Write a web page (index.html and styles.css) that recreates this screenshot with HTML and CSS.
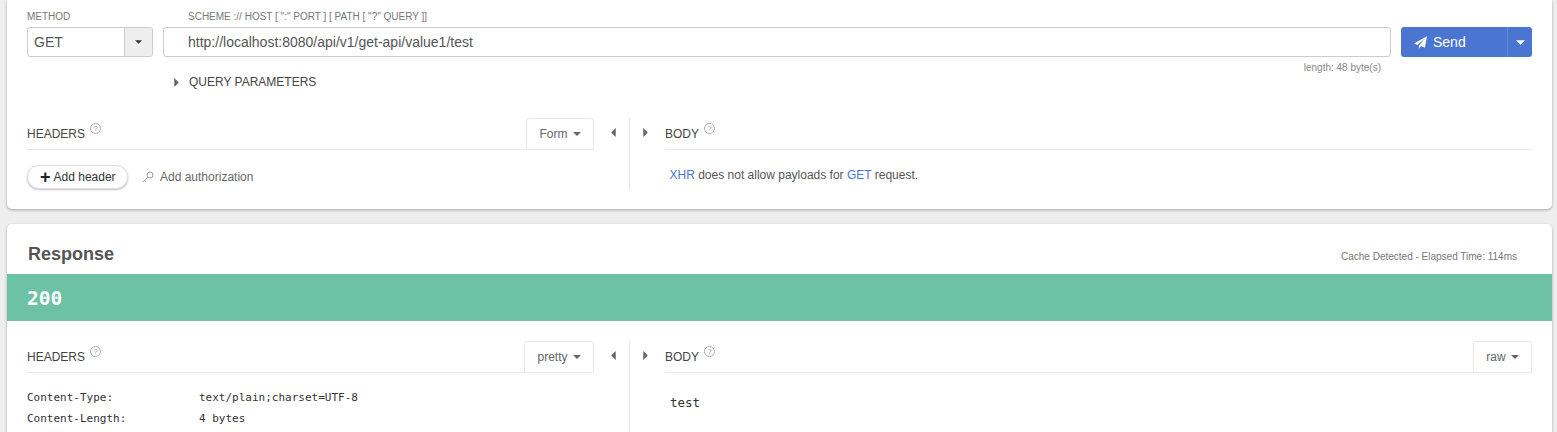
FILE: index.html
```html
<!DOCTYPE html>
<html lang="en">
<head>
<meta charset="utf-8">
<title>REST client</title>
<link rel="stylesheet" href="styles.css">
</head>
<body>
<svg class="defs" width="0" height="0" aria-hidden="true">
  <symbol id="down" viewBox="0 0 8 4"><path d="M0 0h8L4 4z"/></symbol>
  <symbol id="left" viewBox="0 0 4 8"><path d="M4 0v8L0 4z"/></symbol>
  <symbol id="right" viewBox="0 0 4 8"><path d="M0 0v8l4-4z"/></symbol>
</svg>
<main class="page">
  <section class="card request">
    <div class="form-grid">
      <label class="field-label">METHOD</label>
      <label class="field-label url-label">SCHEME :// HOST [ ":" PORT ] [ PATH [ "?" QUERY ]]</label>
      <span></span>
      <div class="select">
        <span class="select-value">GET</span>
        <span class="select-arrow"><svg class="caret dark"><use href="#down"/></svg></span>
      </div>
      <div class="url-input">http://localhost:8080/api/v1/get-api/value1/test</div>
      <div class="send">
        <span class="send-main">
          <svg class="plane" viewBox="0 0 14 14"><path d="M14 .3 11.7 12.6 7.6 10.9 5.3 13.6V10.6L11.6 3 3.6 9.6 0 8.1z"/></svg>
          Send
        </span>
        <span class="send-arrow"><svg class="caret white"><use href="#down"/></svg></span>
      </div>
      <span></span>
      <div class="length">length: 48 byte(s)</div>
    </div>
    <div class="query"><svg class="arrow"><use href="#right"/></svg>QUERY PARAMETERS</div>
    <div class="panes request-panes">
      <div class="pane left">
        <div class="pane-head">
          <span class="pane-title">HEADERS<span class="help">?</span></span>
          <span class="tab form-tab">Form<svg class="caret"><use href="#down"/></svg></span>
        </div>
        <div class="actions">
          <span class="pill"><span class="plus">+</span>Add header</span>
          <span class="auth">
            <svg class="key" viewBox="0 0 12 12"><circle cx="8" cy="4" r="3"/><path d="M5.8 6.2 1 11M2.5 9.5 4 11"/></svg>
            Add authorization
          </span>
        </div>
      </div>
      <div class="splitter">
        <svg class="arrow"><use href="#left"/></svg>
        <span class="split-line"></span>
        <svg class="arrow"><use href="#right"/></svg>
      </div>
      <div class="pane right">
        <div class="pane-head">
          <span class="pane-title">BODY<span class="help">?</span></span>
        </div>
        <p class="notice"><span class="link">XHR</span> does not allow payloads for <span class="link">GET</span> request.</p>
      </div>
    </div>
  </section>
  <section class="card response">
    <div class="response-head">
      <h2>Response</h2>
      <span class="elapsed">Cache Detected - Elapsed Time: 114ms</span>
    </div>
    <div class="status">200</div>
    <div class="panes response-panes">
      <div class="pane left">
        <div class="pane-head">
          <span class="pane-title">HEADERS<span class="help">?</span></span>
          <span class="tab pretty-tab">pretty<svg class="caret"><use href="#down"/></svg></span>
        </div>
        <dl class="headers">
          <dt>Content-Type:</dt><dd>text/plain;charset=UTF-8</dd>
          <dt>Content-Length:</dt><dd>4 bytes</dd>
        </dl>
      </div>
      <div class="splitter">
        <svg class="arrow"><use href="#left"/></svg>
        <span class="split-line"></span>
        <svg class="arrow"><use href="#right"/></svg>
      </div>
      <div class="pane right">
        <div class="pane-head">
          <span class="pane-title">BODY<span class="help">?</span></span>
          <span class="tab raw-tab">raw<svg class="caret"><use href="#down"/></svg></span>
        </div>
        <pre class="body-text">test</pre>
      </div>
    </div>
  </section>
</main>
</body>
</html>
```
FILE: styles.css
```css
* { box-sizing: border-box; }
html, body { margin: 0; height: 432px; overflow: hidden; }
body { background: #eee; color: #444; font-family: "Liberation Sans", Arial, sans-serif; font-size: 12px; }
.defs { position: absolute; }
.page { padding: 0 5px 0 7px; }

.card { background: #fff; box-shadow: 0 1px 3px rgba(0,0,0,.3); }
.request { height: 209px; padding: 0 20px; border-radius: 0 0 5px 5px; }
.response { margin-top: 15px; height: 208px; border-radius: 5px 5px 0 0; }

.form-grid { display: grid; grid-template-columns: 126px 1fr 131px; grid-template-rows: 27px 30px 15px; column-gap: 10px; }
.field-label { padding-top: 11px; font-size: 10px; line-height: 11px; color: #777; }
.url-label { padding-left: 25px; }
.select { display: flex; height: 30px; border: 1px solid #ccc; border-radius: 3px; }
.select-value { flex: 1; padding-left: 6px; font-size: 14px; line-height: 28px; color: #555; }
.select-arrow { flex: none; width: 28px; display: flex; align-items: center; justify-content: center; background: #eee; border-left: 1px solid #ccc; border-radius: 0 2px 2px 0; }
.url-input { height: 30px; padding-left: 24px; border: 1px solid #ccc; border-radius: 3px; font-size: 14px; line-height: 28px; color: #555; }
.send { display: flex; height: 30px; background: #4a76d1; border-radius: 3px; color: #fff; font-size: 14px; }
.send-main { width: 106px; display: flex; align-items: center; padding-left: 13px; gap: 6px; }
.send-arrow { flex: 1; display: flex; align-items: center; justify-content: center; border-left: 1px solid #5f86d8; }
.plane { width: 13px; height: 13px; fill: #fff; }
.length { padding: 5px 10px 0 0; text-align: right; font-size: 10px; line-height: 11px; color: #888; }

.caret { width: 8px; height: 4px; fill: #666; margin-left: 5px; }
.caret.dark { fill: #333; margin: 0; width: 7px; }
.caret.white { fill: #fff; margin: 0; width: 9px; height: 5px; }
.arrow { width: 5px; height: 9px; fill: #666; flex: none; }

.query { display: flex; align-items: center; margin: 3px 0 0 147px; height: 14px; line-height: 14px; color: #444; }
.query .arrow { margin-right: 10px; }

.panes { display: flex; }
.request-panes { margin-top: 29px; height: 72px; }
.response-panes { margin: 20px 20px 0; height: 91px; }
.pane.left { width: 567px; }
.pane.right { flex: 1; }
.splitter { width: 71px; display: flex; justify-content: center; gap: 13px; }
.splitter .arrow { margin-top: 10px; }
.split-line { width: 1px; background: #e8e8e8; }
.pane-head { display: flex; align-items: flex-end; justify-content: space-between; height: 32px; border-bottom: 1px solid #e8e8e8; }
.pane-title { padding-bottom: 8px; line-height: 14px; color: #444; }
.help { display: inline-block; width: 11px; height: 11px; margin-left: 5px; vertical-align: 7px; border: 1px solid #aaa; border-radius: 50%; font-size: 8px; line-height: 9px; text-align: center; color: #999; }
.tab { display: flex; align-items: center; justify-content: center; height: 32px; margin-bottom: -1px; border: 1px solid #e8e8e8; border-radius: 3px 3px 0 0; color: #666; padding-bottom: 1px; }
.form-tab { width: 68px; }
.pretty-tab { width: 70px; }
.raw-tab { width: 59px; }

.actions { display: flex; align-items: center; margin-top: 15px; }
.pill { display: flex; align-items: center; height: 24px; width: 101px; padding-left: 12px; background: #fff; border: 1px solid #ddd; border-radius: 12px; box-shadow: 0 1px 2px rgba(0,0,0,.25); color: #333; }
.plus { font-weight: bold; font-size: 18px; line-height: 14px; margin-right: 3px; color: #222; }
.auth { display: flex; align-items: center; gap: 6px; margin-left: 14px; color: #666; }
.key { width: 12px; height: 12px; fill: none; stroke: #999; stroke-width: 1; }

.notice { margin: 18px 0 0 4.5px; line-height: 14px; color: #555; }
.link { color: #4a76d1; }

.response-head { display: flex; justify-content: space-between; height: 50px; padding: 0 35px 0 21px; }
.response-head h2 { margin: 20px 0 0; font-size: 18px; line-height: 20px; color: #555; }
.elapsed { margin-top: 27px; font-size: 10px; line-height: 11px; color: #777; }
.status { height: 47px; padding-left: 20px; background: #6dc1a5; color: #fff; font: bold 19.5px/49px "DejaVu Sans Mono", monospace; }

.headers { display: grid; grid-template-columns: 172px 1fr; grid-auto-rows: 21px; margin: 14px 0 0; font: 11px/21px "DejaVu Sans Mono", monospace; color: #333; }
.headers dd { margin: 0; }
.body-text { margin: 19px 0 0 5px; font: 12.5px/21px "DejaVu Sans Mono", monospace; color: #333; }
```
